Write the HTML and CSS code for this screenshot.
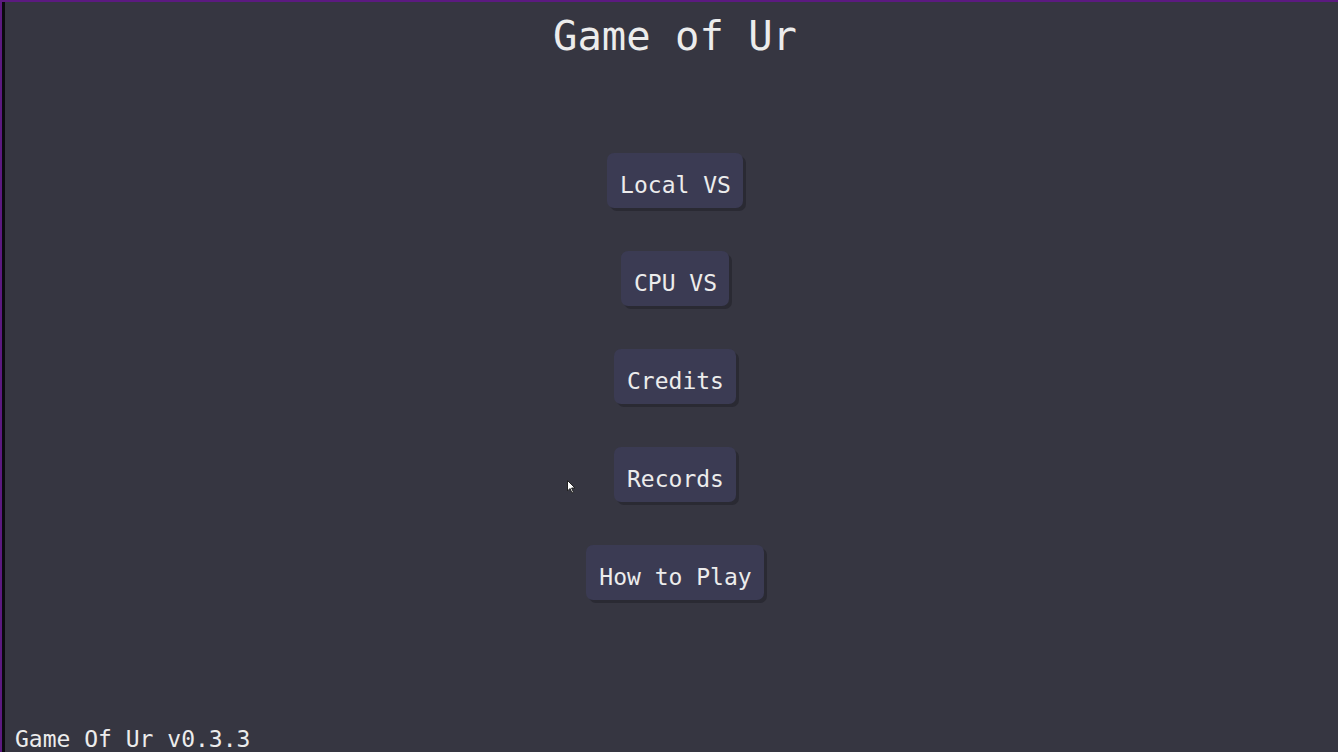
FILE: index.html
```html
<!DOCTYPE html>
<html>
<head>
<meta charset="utf-8">
<link rel="stylesheet" href="styles.css">
</head>
<body>
<div class="frame">
  <div class="edge"></div>
  <main class="screen">
    <h1 class="title">Game of Ur</h1>
    <nav class="menu">
      <button class="btn">Local VS</button>
      <button class="btn">CPU VS</button>
      <button class="btn">Credits</button>
      <button class="btn">Records</button>
      <button class="btn">How to Play</button>
    </nav>
    <footer class="version">Game Of Ur v0.3.3</footer>
    <svg class="cursor" width="10" height="15" viewBox="0 0 10 15"><path d="M0.5 0.5 L0.5 11 L3 8.5 L5 13 L6.5 12.3 L4.6 8 L8 8 Z" fill="#fff" stroke="#222" stroke-width="1"/></svg>
  </main>
</div>
</body>
</html>
```
FILE: styles.css
```css
html, body {
  margin: 0;
  padding: 0;
  height: 100%;
  background: #363641;
  overflow: hidden;
}
.frame {
  display: flex;
  height: 752px;
  border-top: 2px solid #5c1a80;
  box-sizing: border-box;
}
.edge {
  width: 2px;
  border-right: 3px solid #0a0a0e;
  background: #5c1a80;
  flex: none;
}
.screen {
  flex: 1;
  position: relative;
  display: flex;
  flex-direction: column;
  align-items: center;
  padding-left: 7px;
  font-family: "DejaVu Sans Mono", "Liberation Mono", monospace;
  color: #ececec;
}
.title {
  margin: 12px 0 0;
  font-size: 40.5px;
  font-weight: normal;
  line-height: 44px;
}
.menu {
  margin-top: 95px;
  display: flex;
  flex-direction: column;
  align-items: center;
  gap: 43px;
}
.btn {
  font-family: "DejaVu Sans Mono", "Liberation Mono", monospace;
  font-size: 23px;
  color: #ececec;
  background: #3b3b53;
  border: none;
  border-radius: 7px;
  height: 55px;
  padding: 8px 12px 0 13px;
  box-shadow: 3px 3px 0 #2a2a33;
}
.version {
  position: absolute;
  left: 10px;
  bottom: -2px;
  font-size: 23px;
  line-height: 30px;
}
.cursor {
  position: absolute;
  left: 562px;
  top: 478px;
}
```
